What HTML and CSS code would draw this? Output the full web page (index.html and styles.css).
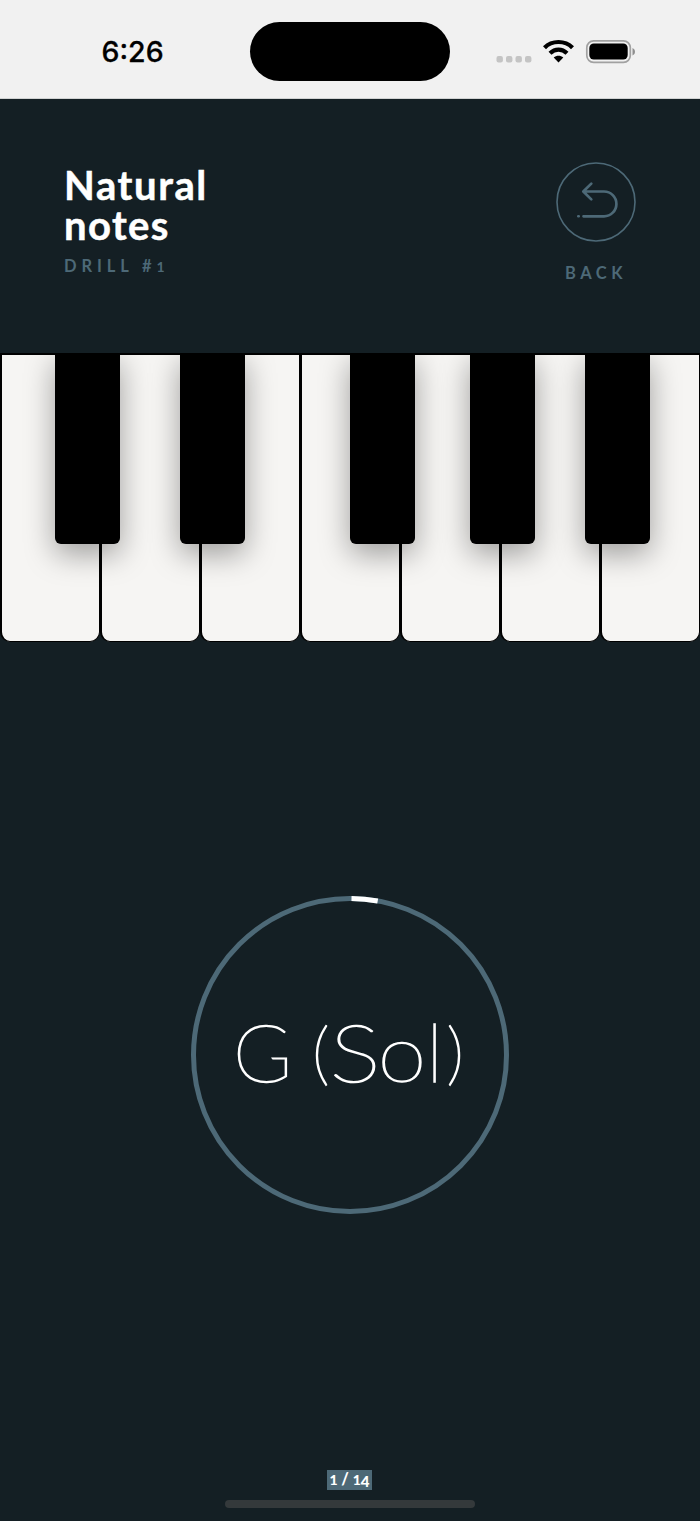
FILE: index.html
```html
<!DOCTYPE html>
<html lang="en">
<head>
<meta charset="utf-8">
<title>Natural notes</title>
<link rel="stylesheet" href="styles.css">
</head>
<body>
<div class="status-bar">
  <div class="clock">6:26</div>
  <div class="island"></div>
  <svg class="status-icons" width="144" height="32" viewBox="0 0 144 32">
    <g fill="#c4c4c4">
      <rect x="0.5" y="20" width="6.4" height="6.4" rx="2"/>
      <rect x="10" y="20" width="6.4" height="6.4" rx="2"/>
      <rect x="19.5" y="20" width="6.4" height="6.4" rx="2"/>
      <rect x="29" y="20" width="6.4" height="6.4" rx="2"/>
    </g>
    <g fill="none" stroke="#000" stroke-width="4.2">
      <path d="M48.5 11.7C56 4.1 69 4.1 76.5 11.7"/>
      <path d="M54 17.3C59 12.4 66 12.4 71 17.3"/>
    </g>
    <path d="M57.7 21.6C60.6 19.2 64.4 19.2 67.3 21.6L62.5 26.4Z"/>
    <rect x="90.800" y="4.800" width="43.500" height="21.500" rx="6.800" fill="none" stroke="#a1a1a1" stroke-width="1.700"/>
    <rect x="93.300" y="7.500" width="38.400" height="16" rx="4.500"/>
    <path d="M136.500 12C139.800 13.300 139.800 18.200 136.500 19.500Z" fill="#8f8f8f"/>
  </svg>
</div>
<header class="header">
  <div class="heading">
    <h1 class="title"><span class="title-first">Natural</span><span class="title-second">notes</span></h1>
    <p class="subtitle">DRILL #<span class="small-digit">1</span></p>
  </div>
  <div class="back">
    <svg width="80" height="80" viewBox="0 0 80 80" fill="none" stroke="#4d6977">
      <circle cx="40" cy="40" r="39" stroke-width="1.6"/>
      <path d="M27.500 29.500H48A12.400 12.400 0 0 1 48 54.300H27.500M35.300 21.600L27.300 29.500L35.300 37.400" stroke-width="2.700" stroke-linecap="round" stroke-linejoin="round"/>
      <path d="M22.200 54.300H22.800" stroke-width="2.400" stroke-linecap="round"/>
    </svg>
    <span class="back-label">BACK</span>
  </div>
</header>
<div class="keyboard">
  <div class="white-key"></div><div class="white-key"></div><div class="white-key"></div><div class="white-key"></div><div class="white-key"></div><div class="white-key"></div><div class="white-key"></div>
  <div class="black-key c-sharp"></div>
  <div class="black-key d-sharp"></div>
  <div class="black-key f-sharp"></div>
  <div class="black-key g-sharp"></div>
  <div class="black-key a-sharp"></div>
</div>
<main class="stage">
  <div class="timer">
    <svg class="ring" width="320" height="320" viewBox="0 0 320 320" fill="none" stroke-width="5">
      <circle cx="160" cy="160" r="156.500" stroke="#4d6977"/>
      <path d="M161.500 3.500A156.500 156.500 0 0 1 187.700 6" stroke="#fff"/>
    </svg>
    <div class="note"><span class="glyph-g">G</span><span class="paren paren-open">(</span><span class="glyph-s">S</span><span class="glyph-o">o</span><span class="glyph-l">l</span><span class="paren paren-close">)</span></div>
  </div>
</main>
<footer class="footer">
  <div class="counter"><span class="low-digit">1</span> / <span class="low-digit">1</span><span class="four">4</span></div>
  <div class="home-indicator"></div>
</footer>
</body>
</html>
```
FILE: styles.css
```css
* { box-sizing: border-box; }
body {
  margin: 0;
  width: 700px;
  height: 1521px;
  overflow: hidden;
  display: flex;
  flex-direction: column;
  background: #141f24;
  color: #fff;
  font-family: Lato, sans-serif;
}
.status-bar {
  height: 99px;
  flex: none;
  display: flex;
  align-items: flex-start;
  background: #f1f1f1;
  border-bottom: 1px solid #d0d2d2;
  color: #000;
}
.clock {
  width: 148px;
  margin: 35px 0 0 101.5px;
  font: 500 28.500px/34px Inter, sans-serif;
  letter-spacing: 0;
  -webkit-text-stroke: 0.3px #000;
}
.island {
  width: 200px;
  height: 59px;
  margin: 22px 0 0 0.5px;
  border-radius: 30px;
  background: #000;
}
.status-icons { margin: 36px 0 0 46px; }
.header {
  height: 254px;
  flex: none;
  display: flex;
  justify-content: space-between;
  padding: 63px 64px 0 64px;
}
.title {
  margin: 3px 0 0;
  font: 700 40px/40px Lato, sans-serif;
}
.title-first, .title-second { display: block; -webkit-text-stroke: 0.5px #fff; }
.title-first { letter-spacing: 1.6px; }
.title-second { letter-spacing: 1.4px; }
.subtitle {
  margin: 11px 0 0;
  color: #4d6977;
  font-size: 16.500px;
  font-weight: 700;
  line-height: 20px;
  letter-spacing: 4.900px;
}
.small-digit { font-size: 14px; }
.back {
  display: flex;
  flex-direction: column;
  align-items: center;
  width: 80px;
  color: #4d6977;
}
.back-label {
  margin-top: 21px;
  font-size: 16.500px;
  font-weight: 700;
  line-height: 20px;
  letter-spacing: 4.500px;
}
.keyboard {
  position: relative;
  height: 289px;
  flex: none;
  display: grid;
  grid-template-columns: repeat(7, 100px);
}
.white-key {
  border: solid #000;
  border-width: 2px 1px 1px 2px;
  border-radius: 0 0 10px 10px;
  background: #f6f5f3;
}
.black-key {
  position: absolute;
  top: 0;
  width: 65px;
  height: 191px;
  border-radius: 0 0 6px 6px;
  background: #000;
  box-shadow: 0 10px 30px rgba(0, 0, 0, 0.360);
  clip-path: inset(0 -50px -60px -50px);
}
.c-sharp { left: 55px; }
.d-sharp { left: 180px; }
.f-sharp { left: 350px; }
.g-sharp { left: 470px; }
.a-sharp { left: 585px; }
.stage {
  flex: 1;
  display: flex;
  justify-content: center;
  padding-top: 253px;
}
.timer {
  display: grid;
  width: 320px;
  height: 320px;
}
.ring, .note { grid-area: 1 / 1; }
.note {
  display: flex;
  justify-content: center;
  align-items: center;
  padding-bottom: 8px;
  font-size: 80px;
  font-weight: 100;
  line-height: 96px;
  -webkit-text-stroke: 1.5px #fff;
}
.glyph-g { margin-right: 20px; }
.paren { font-size: 68px; }
.paren-open { margin-right: 5px; }
.glyph-s { margin-right: 3.5px; transform: scaleX(1.2); }
.glyph-o { margin-right: 2px; transform: scaleX(1.1); }
.glyph-l { margin-right: 4px; }
.paren-close { margin-right: 3px; }
.footer {
  height: 51px;
  flex: none;
  display: flex;
  flex-direction: column;
  align-items: center;
}
.counter {
  width: 45px;
  height: 20px;
  margin-left: -1px;
  background: #4d6977;
  font-size: 16px;
  font-weight: 900;
  line-height: 18px;
  text-align: center;
  white-space: nowrap;
}
.low-digit { font-size: 14px; }
.four { position: relative; top: 2px; font-size: 15px; }
.home-indicator {
  width: 250px;
  height: 8px;
  margin-top: 10px;
  border-radius: 4px;
  background: #34393b;
}
```
